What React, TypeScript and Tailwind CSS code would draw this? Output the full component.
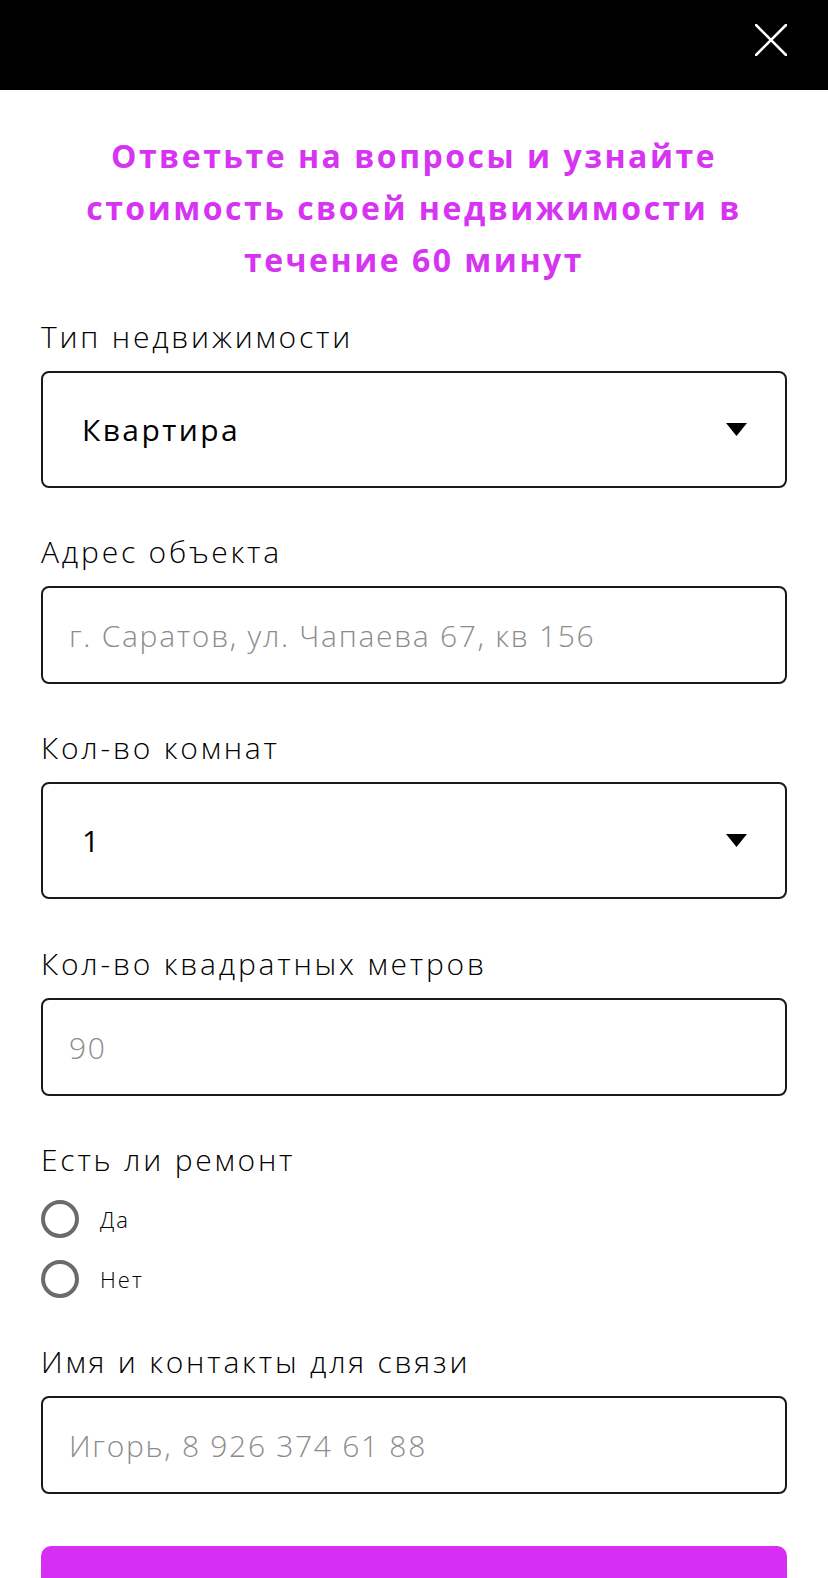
const font = { fontFamily: '"Open Sans", "Noto Sans", sans-serif' };

function Label({ children }: { children: string }) {
  return <div className="text-[30px] leading-[40px] font-light tracking-[2.8px] text-black">{children}</div>;
}

function SelectBox({ value }: { value: string }) {
  return (
    <div className="mt-[14px] flex h-[117px] items-center justify-between rounded-[8px] border-2 border-[#1a1a1a] pl-[39px] pr-[38px]">
      <span className="text-[30px] tracking-[2.4px] text-black">{value}</span>
      <svg width="21" height="13" viewBox="0 0 21 13">
        <path d="M0 0 H21 L10.5 13 Z" fill="#000" />
      </svg>
    </div>
  );
}

function TextBox({ placeholder }: { placeholder: string }) {
  return (
    <div className="mt-[14px] flex h-[98px] items-center rounded-[8px] border-2 border-[#1a1a1a] pl-[26px]">
      <span className="text-[30px] font-light tracking-[1.7px] text-[#8c8c8c]">{placeholder}</span>
    </div>
  );
}

function Radio({ label }: { label: string }) {
  return (
    <div className="flex h-[60px] items-center gap-[21px]">
      <div className="h-[38px] w-[38px] rounded-full border-[4px] border-[#6b6b6b]" />
      <span className="text-[22px] font-light tracking-[2px] text-black">{label}</span>
    </div>
  );
}

export default function App() {
  return (
    <div className="min-h-[1578px] bg-white" style={font}>
      <div className="flex h-[90px] items-start justify-end bg-black pr-[41px] pt-[24px]">
        <svg width="32" height="32" viewBox="0 0 32 32">
          <path d="M1 1 L31 31 M31 1 L1 31" stroke="#fff" strokeWidth="2.6" strokeLinecap="round" />
        </svg>
      </div>
      <div className="px-[41px] pt-[40px]">
        <h1 className="text-center text-[32px] leading-[52px] font-bold tracking-[2.5px] text-[#d634f2]">
          Ответьте на вопросы и узнайте
          <br />
          стоимость своей недвижимости в
          <br />
          течение 60 минут
        </h1>
        <div className="mt-[31px]">
          <Label>Тип недвижимости</Label>
          <SelectBox value="Квартира" />
        </div>
        <div className="mt-[44px]">
          <Label>Адрес объекта</Label>
          <TextBox placeholder="г. Саратов, ул. Чапаева 67, кв 156" />
        </div>
        <div className="mt-[44px]">
          <Label>Кол-во комнат</Label>
          <SelectBox value="1" />
        </div>
        <div className="mt-[45px]">
          <Label>Кол-во квадратных метров</Label>
          <TextBox placeholder="90" />
        </div>
        <div className="mt-[44px]">
          <Label>Есть ли ремонт</Label>
          <div className="mt-[9px]">
            <Radio label="Да" />
            <Radio label="Нет" />
          </div>
        </div>
        <div className="mt-[33px]">
          <Label>Имя и контакты для связи</Label>
          <TextBox placeholder="Игорь, 8 926 374 61 88" />
        </div>
        <div className="mt-[52px] h-[60px] rounded-t-[10px] bg-[#d62ef2]" />
      </div>
    </div>
  );
}
